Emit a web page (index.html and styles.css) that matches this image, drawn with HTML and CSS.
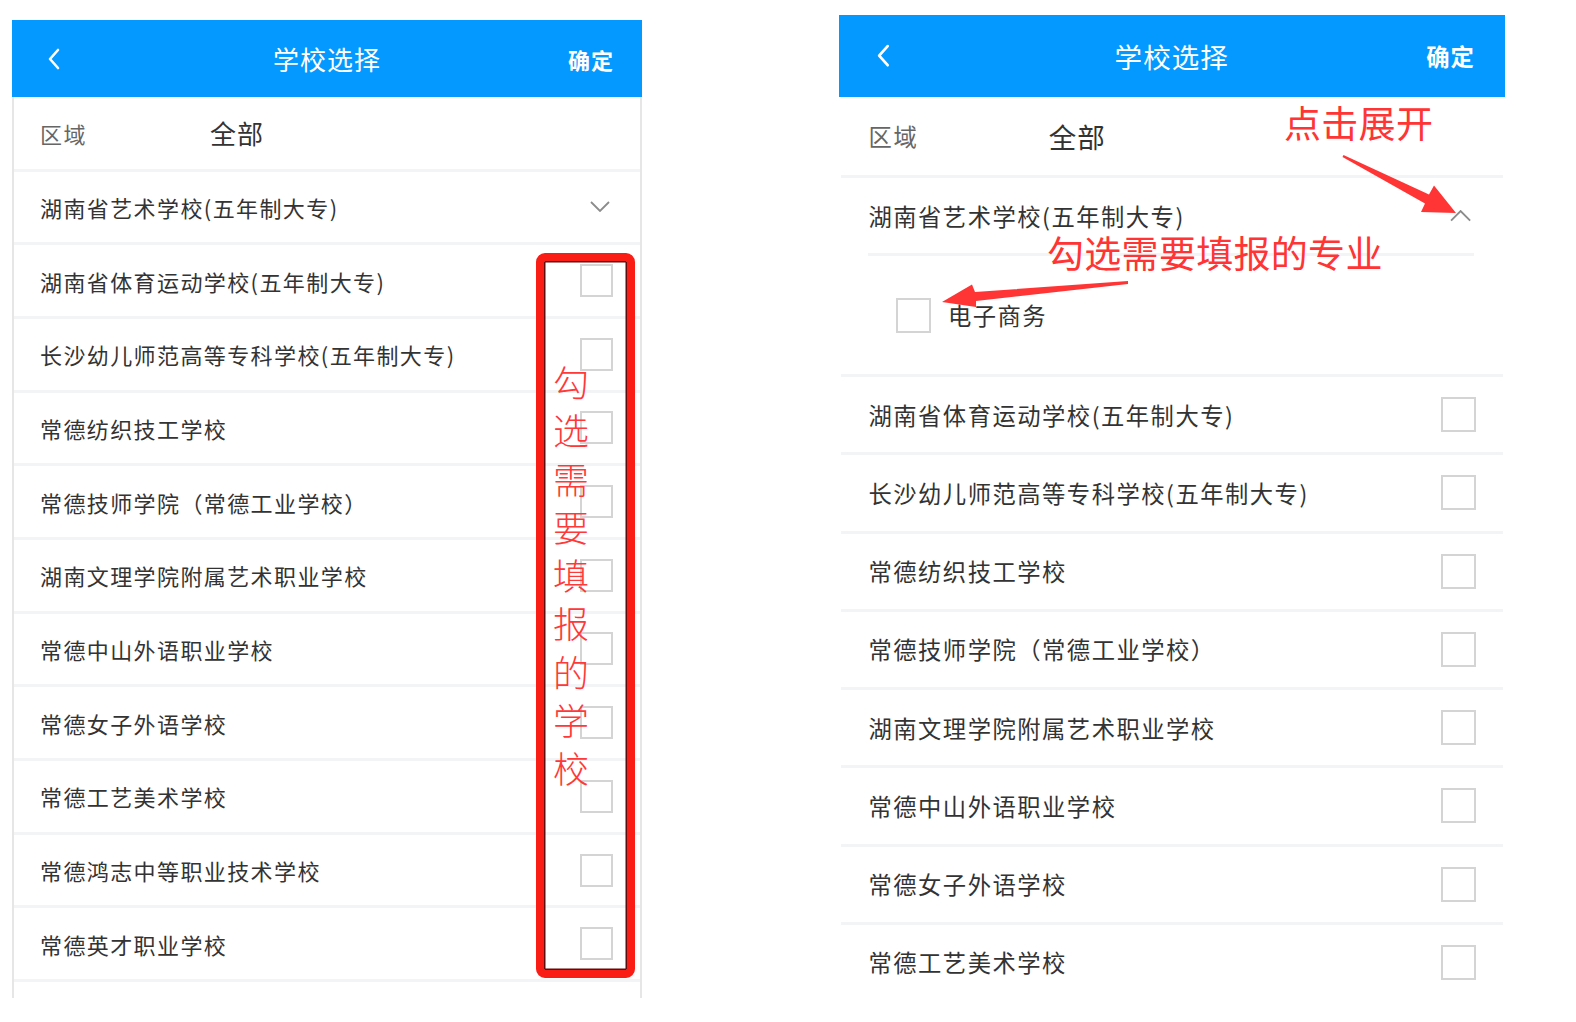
FILE: index.html
```html
<!doctype html>
<html lang="zh-CN">
<head>
	<meta charset="UTF-8">
	<meta name="viewport" content="width=device-width">
	<title>学校选择</title>
<link rel="stylesheet" href="styles.css">
</head>
<body>

<div class="page">

<section class="phone">
	<header class="bar">
		<span class="bar-back"><svg width="14" height="22" viewBox="0 0 14 22"><polyline points="11,2 3,11 11,20" fill="none" stroke="#fff" stroke-width="2.6" stroke-linecap="round" stroke-linejoin="round"/></svg></span>
		<h1 class="bar-title">学校选择</h1>
		<span class="bar-ok">确定</span>
	</header>
	<div class="list">
		<div class="row row--area"><span class="area-label">区域</span><span class="area-value">全部</span></div>
		<div class="row"><span>湖南省艺术学校(五年制大专)</span><svg class="fold" width="20" height="11" viewBox="0 0 20 11"><polyline points="1,1 10,10 19,1" fill="none" stroke="#8c8c8c" stroke-width="1.8"/></svg></div>
		<div class="row"><span>湖南省体育运动学校(五年制大专)</span><i class="check"></i></div>
		<div class="row"><span>长沙幼儿师范高等专科学校(五年制大专)</span><i class="check"></i></div>
		<div class="row"><span>常德纺织技工学校</span><i class="check"></i></div>
		<div class="row"><span>常德技师学院（常德工业学校）</span><i class="check"></i></div>
		<div class="row"><span>湖南文理学院附属艺术职业学校</span><i class="check"></i></div>
		<div class="row"><span>常德中山外语职业学校</span><i class="check"></i></div>
		<div class="row"><span>常德女子外语学校</span><i class="check"></i></div>
		<div class="row"><span>常德工艺美术学校</span><i class="check"></i></div>
		<div class="row"><span>常德鸿志中等职业技术学校</span><i class="check"></i></div>
		<div class="row"><span>常德英才职业学校</span><i class="check"></i></div>
	</div>
	<div class="mark"><span class="mark-text">勾选需要填报的学校</span></div>
</section>

<section class="phone phone--wide">
	<header class="bar">
		<span class="bar-back"><svg width="14" height="22" viewBox="0 0 14 22"><polyline points="11,2 3,11 11,20" fill="none" stroke="#fff" stroke-width="2.6" stroke-linecap="round" stroke-linejoin="round"/></svg></span>
		<h1 class="bar-title">学校选择</h1>
		<span class="bar-ok">确定</span>
	</header>
	<div class="list">
		<div class="row row--area"><span class="area-label">区域</span><span class="area-value">全部</span></div>
		<div class="group">
			<div class="row row--open"><span>湖南省艺术学校(五年制大专)</span><svg class="fold" width="20" height="11" viewBox="0 0 20 11"><polyline points="1,10 10,1 19,10" fill="none" stroke="#8c8c8c" stroke-width="1.8"/></svg></div>
			<div class="sub"><i class="check"></i><span>电子商务</span></div>
		</div>
		<div class="row"><span>湖南省体育运动学校(五年制大专)</span><i class="check"></i></div>
		<div class="row"><span>长沙幼儿师范高等专科学校(五年制大专)</span><i class="check"></i></div>
		<div class="row"><span>常德纺织技工学校</span><i class="check"></i></div>
		<div class="row"><span>常德技师学院（常德工业学校）</span><i class="check"></i></div>
		<div class="row"><span>湖南文理学院附属艺术职业学校</span><i class="check"></i></div>
		<div class="row"><span>常德中山外语职业学校</span><i class="check"></i></div>
		<div class="row"><span>常德女子外语学校</span><i class="check"></i></div>
		<div class="row"><span>常德工艺美术学校</span><i class="check"></i></div>
	</div>
</section>

<div class="notes">
	<span class="note note--open">点击展开</span>
	<span class="note note--major">勾选需要填报的专业</span>
	<svg class="note-arrows" width="1576" height="1022" viewBox="0 0 1576 1022">
		<polygon points="1343.5,155 1429,194.5 1434,185.5 1456,213 1421,212 1425,203.5 1342.5,157" fill="#ff3535"/>
		<polygon points="942,302 972,284.5 975,292 1128,281 1128,284 976,301 976,307" fill="#ff3535"/>
	</svg>
</div>

</div>

</body>
</html>
```

FILE: styles.css
```css
body {
	margin: 0;
	background: #fff;
	font-family: "Noto Sans CJK SC", "Noto Sans", sans-serif;
}
.page {
	position: relative;
	display: flex;
	align-items: flex-start;
	width: 1576px;
	height: 1022px;
	overflow: hidden;
}
.phone {
	position: relative;
	width: 630px;
	margin: 20px 0 0 12px;
	background: #fff;
}
.phone--wide {
	width: 628px;
	zoom: 1.06;
	margin: 14.2px 0 0 185.8px;
}

.bar {
	display: grid;
	grid-template-columns: 1fr auto 1fr;
	align-items: center;
	height: 77px;
	padding: 0 28px;
	background: #0399fe;
	color: #fff;
}
.bar-back {
	padding-left: 7px;
}
.bar-back svg {
	display: block;
}
.bar-title {
	margin: 0;
	font-size: 26px;
	font-weight: normal;
	letter-spacing: 1px;
}
.bar-ok {
	justify-self: end;
	font-size: 22px;
	font-weight: bold;
	letter-spacing: 1px;
}

.list {
	border-left: 2px solid #e6e6e6;
	border-right: 2px solid #e6e6e6;
	padding-bottom: 16px;
}
.phone--wide .list {
	border-color: transparent;
	padding-bottom: 0;
}
.row {
	display: flex;
	align-items: center;
	justify-content: space-between;
	height: 70.7px;
	padding: 0 27px 0 26px;
	border-bottom: 3px solid #f3f4f6;
	font-size: 22px;
	letter-spacing: 1.4px;
	color: #333;
	white-space: nowrap;
}
.phone--wide .row {
	height: 71px;
	padding-right: 25px;
}
.phone--wide .list > .row:last-child {
	border-bottom: 0;
}
.row--area {
	height: 71.5px;
	justify-content: flex-start;
}
.phone--wide .row--area {
	height: 74px;
}
.area-label {
	width: 170px;
	color: #666;
	letter-spacing: 1.5px;
}
.area-value {
	font-size: 26px;
	letter-spacing: 1px;
}
.fold {
	margin-right: 3px;
}
.check {
	display: block;
	flex-shrink: 0;
	width: 33px;
	height: 33px;
	box-sizing: border-box;
	border: 2px solid #d4d4d4;
	background: #fff;
}

.group {
	border-bottom: 3px solid #f3f4f6;
}
.phone--wide .row--open {
	border-bottom: 0;
	padding-right: 27px;
}
.sub {
	display: flex;
	align-items: center;
	gap: 16px;
	height: 111px;
	margin: 0 27px 0 26px;
	padding-left: 26px;
	border-top: 3px solid #f3f4f6;
	font-size: 22px;
	letter-spacing: 1.4px;
	color: #333;
}

/* annotations drawn over the screenshots */
.mark {
	position: absolute;
	left: 524px;
	top: 233px;
	width: 99px;
	height: 725px;
	box-sizing: border-box;
	padding: 96px 0 0 9px;
	border: 8px solid #fa1d16;
	border-radius: 9px;
	box-shadow: inset 0 0 0 1.5px #5e0c0c;
}
.mark-text {
	display: block;
	width: 36px;
	font-size: 36px;
	line-height: 48.3px;
	color: #ff3838;
	font-weight: 300;
}
.notes {
	position: absolute;
	left: 0;
	top: 0;
	width: 1576px;
	height: 1022px;
	pointer-events: none;
}
.note {
	position: absolute;
	font-size: 37px;
	line-height: 1;
	letter-spacing: .3px;
	color: #ff3434;
	white-space: nowrap;
}
.note--open {
	left: 1284px;
	top: 104px;
}
.note--major {
	left: 1047px;
	top: 234px;
}
.note-arrows {
	position: absolute;
	left: 0;
	top: 0;
}
```
